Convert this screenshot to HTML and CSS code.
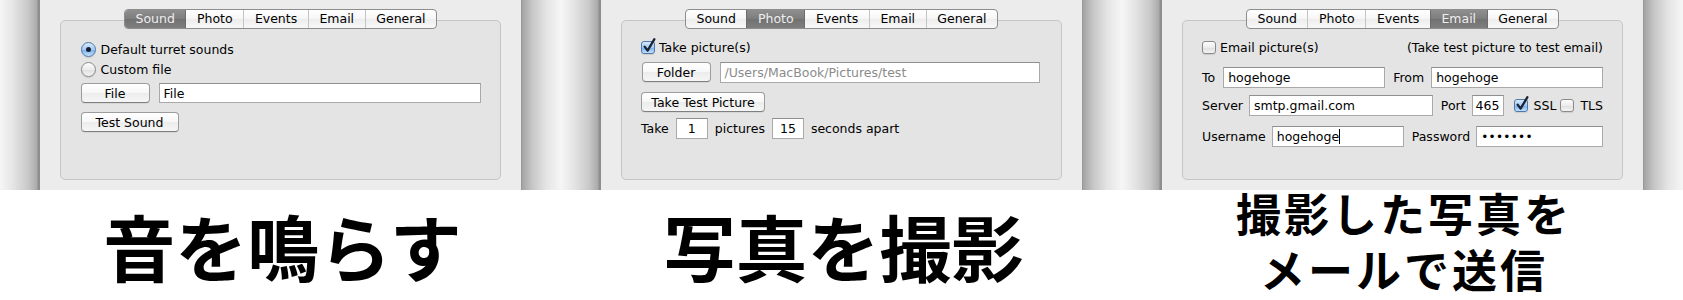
FILE: index.html
```html
<!DOCTYPE html>
<html lang="ja">
<head>
<meta charset="utf-8">
<title>Turret settings</title>
<link rel="stylesheet" href="styles.css">
</head>
<body>
<main class="sheet">
  <div class="strip">
    <section class="panel">
      <div class="window">
        <nav class="tabs">
          <span class="tab is-active">Sound</span>
          <span class="tab">Photo</span>
          <span class="tab">Events</span>
          <span class="tab">Email</span>
          <span class="tab">General</span>
        </nav>
        <div class="group">
          <div class="row mt2"><span class="radio is-on"></span>Default turret sounds</div>
          <div class="row"><span class="radio"></span>Custom file</div>
          <div class="row mt4"><button type="button" class="btn btn-std">File</button><span class="field field-grow field-short">File</span></div>
          <div class="row mt9"><button type="button" class="btn btn-sound">Test Sound</button></div>
        </div>
      </div>
    </section>

    <section class="panel">
      <div class="window">
        <nav class="tabs">
          <span class="tab">Sound</span>
          <span class="tab is-active">Photo</span>
          <span class="tab">Events</span>
          <span class="tab">Email</span>
          <span class="tab">General</span>
        </nav>
        <div class="group">
          <div class="row"><span class="check is-on"><svg class="tick" viewBox="0 0 16 17" width="16" height="17"><path d="M3.6 9.6 L6.6 13.6 L13.4 2.2" fill="none" stroke="#1b2336" stroke-width="2.3" stroke-linecap="round" stroke-linejoin="round"/></svg></span>Take picture(s)</div>
          <div class="row mt5"><button type="button" class="btn btn-std">Folder</button><span class="field field-grow field-path">/Users/MacBook/Pictures/test</span></div>
          <div class="row mt10"><button type="button" class="btn btn-take">Take Test Picture</button></div>
          <div class="row row-tall mt6 take-row"><span>Take</span><span class="field field-num">1</span><span>pictures</span><span class="field field-num">15</span><span>seconds apart</span></div>
        </div>
      </div>
    </section>

    <section class="panel">
      <div class="window">
        <nav class="tabs">
          <span class="tab">Sound</span>
          <span class="tab">Photo</span>
          <span class="tab">Events</span>
          <span class="tab is-active">Email</span>
          <span class="tab">General</span>
        </nav>
        <div class="group">
          <div class="row row-split"><span class="inline"><span class="check"></span>Email picture(s)</span><span>(Take test picture to test email)</span></div>
          <div class="row row-tall mt10">
            <span>To</span><span class="field field-to">hogehoge</span>
            <span class="ml8">From</span><span class="field field-grow ml7">hogehoge</span>
          </div>
          <div class="row row-tall mt7">
            <span>Server</span><span class="field field-grow">smtp.gmail.com</span>
            <span class="ml8">Port</span><span class="field field-port">465</span>
            <span class="check is-on ml10"><svg class="tick" viewBox="0 0 16 17" width="16" height="17"><path d="M3.6 9.6 L6.6 13.6 L13.4 2.2" fill="none" stroke="#1b2336" stroke-width="2.3" stroke-linecap="round" stroke-linejoin="round"/></svg></span><span class="opt">SSL</span>
            <span class="check ml4"></span><span class="opt">TLS</span>
          </div>
          <div class="row row-tall mt10">
            <span>Username</span><span class="field field-user"><span class="caret">hogehoge</span></span>
            <span class="ml8">Password</span><span class="field field-grow field-pass ml8">•••••••</span>
          </div>
        </div>
      </div>
    </section>
  </div>

  <div class="captions">
    <p class="cap cap-big">音を鳴らす</p>
    <p class="cap cap-big">写真を撮影</p>
    <p class="cap cap-small">撮影した写真を<br>メールで送信</p>
  </div>
</main>
</body>
</html>
```

FILE: styles.css
```css
* { box-sizing: border-box; }

html, body {
  margin: 0;
  padding: 0;
  background: #ffffff;
}

body {
  width: 1683px;
  height: 300px;
  overflow: hidden;
}

.sheet {
  display: flex;
  flex-direction: column;
}

/* ---------- screenshot strip ---------- */
.strip {
  display: flex;
  height: 190px;
}

.panel {
  width: 561px;
  height: 190px;
  padding: 0 40px;
  background: linear-gradient(to right,
    #f6f6f6 0px, #e6e6e6 12px, #c9c9c9 28px, #aaaaaa 37px, #8e8e8e 38px, #8e8e8e 40px,
    #8e8e8e 521px, #a3a3a3 522px, #c6c6c6 532px, #e4e4e4 546px, #f6f6f6 561px);
}

.window {
  width: 481px;
  height: 190px;
  background: #ececec;
  padding: 9px 20px 10px;
  display: flex;
  flex-direction: column;
  font-family: "DejaVu Sans", "Liberation Sans", sans-serif;
  font-size: 12.5px;
  color: #000;
}

/* tabs */
.tabs {
  align-self: center;
  display: flex;
  height: 20px;
  border: 1px solid #8d8d8d;
  border-radius: 4px;
  overflow: hidden;
  background: linear-gradient(#ffffff, #f6f6f6 50%, #ededed 51%, #f8f8f8);
  position: relative;
  z-index: 1;
}

.tab {
  padding: 0 10.6px;
  line-height: 18px;
  border-left: 1px solid #c4c4c4;
  white-space: nowrap;
}

.tab:first-child { border-left: 0; }

.tab.is-active {
  background: linear-gradient(#8f8f8f, #7d7d7d 50%, #717171 51%, #7f7f7f);
  color: #eeeeee;
  border-left-color: #6d6d6d;
}

.tab.is-active + .tab { border-left-color: #6d6d6d; }

/* group box */
.group {
  margin-top: -9px;
  height: 160px;
  border: 1px solid #c5c5c5;
  border-radius: 5px;
  background: #e4e4e4;
  padding: 16px 19px 0;
  display: flex;
  flex-direction: column;
}

.row {
  display: flex;
  align-items: center;
  height: 20px;
  white-space: nowrap;
}

.row-tall { height: 21px; }

.row-split { justify-content: space-between; }

.inline {
  display: flex;
  align-items: center;
}

.take-row { gap: 7px; }

.mt2 { margin-top: 2px; }
.mt4 { margin-top: 4px; }
.mt5 { margin-top: 5px; }
.mt6 { margin-top: 6px; }
.mt7 { margin-top: 7px; }
.mt9 { margin-top: 9px; }
.mt10 { margin-top: 10px; }
.ml4 { margin-left: 4px; }
.ml7 { margin-left: 7px !important; }
.ml8 { margin-left: 8px; }
.ml10 { margin-left: 10px; }

/* radio */
.radio {
  flex: none;
  width: 15px;
  height: 15px;
  margin: 0 4.5px 0 1px;
  border-radius: 50%;
  border: 1px solid #8a8a8a;
  background: linear-gradient(#fdfdfd, #ececec 50%, #dedede 51%, #f5f5f5);
  box-shadow: 0 1px 1px rgba(0, 0, 0, 0.12);
  display: flex;
  align-items: center;
  justify-content: center;
}

.radio.is-on {
  border-color: #4e78ab;
  background: linear-gradient(#d9eafc, #a3cbf4 50%, #77aeeb 51%, #c3e2fc);
}

.radio.is-on::after {
  content: "";
  width: 5px;
  height: 5px;
  border-radius: 50%;
  background: #1a1f30;
}

/* checkbox */
.check {
  flex: none;
  position: relative;
  width: 14px;
  height: 13px;
  margin-right: 4px;
  border: 1px solid #8a8a8a;
  border-radius: 3px;
  background: linear-gradient(#fdfdfd, #ececec 50%, #dedede 51%, #f5f5f5);
  box-shadow: 0 1px 1px rgba(0, 0, 0, 0.1);
}

.check.is-on {
  border-color: #4e78ab;
  background: linear-gradient(#d9eafc, #a3cbf4 50%, #77aeeb 51%, #c3e2fc);
}

.tick {
  position: absolute;
  left: -1px;
  top: -5px;
}

.opt { margin-left: 2px; }

/* push buttons */
.btn {
  flex: none;
  height: 20px;
  padding: 0;
  border: 1px solid #9c9c9c;
  border-bottom-color: #7f7f7f;
  border-radius: 4px;
  background: linear-gradient(#ffffff, #f7f7f7 50%, #ececec 51%, #f6f6f6);
  box-shadow: 0 1px 0 rgba(0, 0, 0, 0.06);
  font: inherit;
  color: #000;
  display: flex;
  align-items: center;
  justify-content: center;
}

.btn-std { width: 69px; margin-left: 0.5px; }
.btn-sound { width: 98px; margin-left: 0.5px; }
.btn-take { width: 124px; }

/* text fields */
.field {
  flex: none;
  height: 21px;
  padding: 0 4px;
  border: 1px solid #a9a9a9;
  border-top-color: #8f8f8f;
  background: #ffffff;
  display: flex;
  align-items: center;
  margin-left: 6px;
}

.take-row .field { margin-left: 0; }

.field-short { height: 20px; }
.field-grow { flex: 1 1 auto; min-width: 0; }
.field-path { color: #8b8b8b; margin-left: 9.5px; margin-right: 2px; }
.field-num { width: 32px; justify-content: center; padding: 0; }
.field-to { width: 162px; margin-left: 8px; }
.field-port { width: 32px; padding: 0 3px; }
.field-user { width: 132px; }
.field-pass { font-size: 12px; letter-spacing: 0.3px; }

.row > .field-grow:nth-child(2) { margin-left: 9px; }
.row-tall > .field-grow:nth-child(2) { margin-left: 6px; }

.caret {
  border-right: 1px solid #000;
  padding-right: 0;
  line-height: 15px;
}

/* ---------- captions ---------- */
.captions {
  display: flex;
  height: 110px;
}

.cap {
  width: 561px;
  margin: 0;
  display: flex;
  align-items: center;
  justify-content: center;
  text-align: center;
  font-family: "Noto Sans CJK JP", "Noto Sans CJK SC", sans-serif;
  font-weight: 700;
  color: #000;
}

.cap-big {
  font-size: 72px;
  line-height: 1;
  padding-left: 4px;
}

.cap-small {
  font-size: 45px;
  line-height: 56px;
  letter-spacing: 3px;
  padding: 0 0 8px 3px;
}
```
